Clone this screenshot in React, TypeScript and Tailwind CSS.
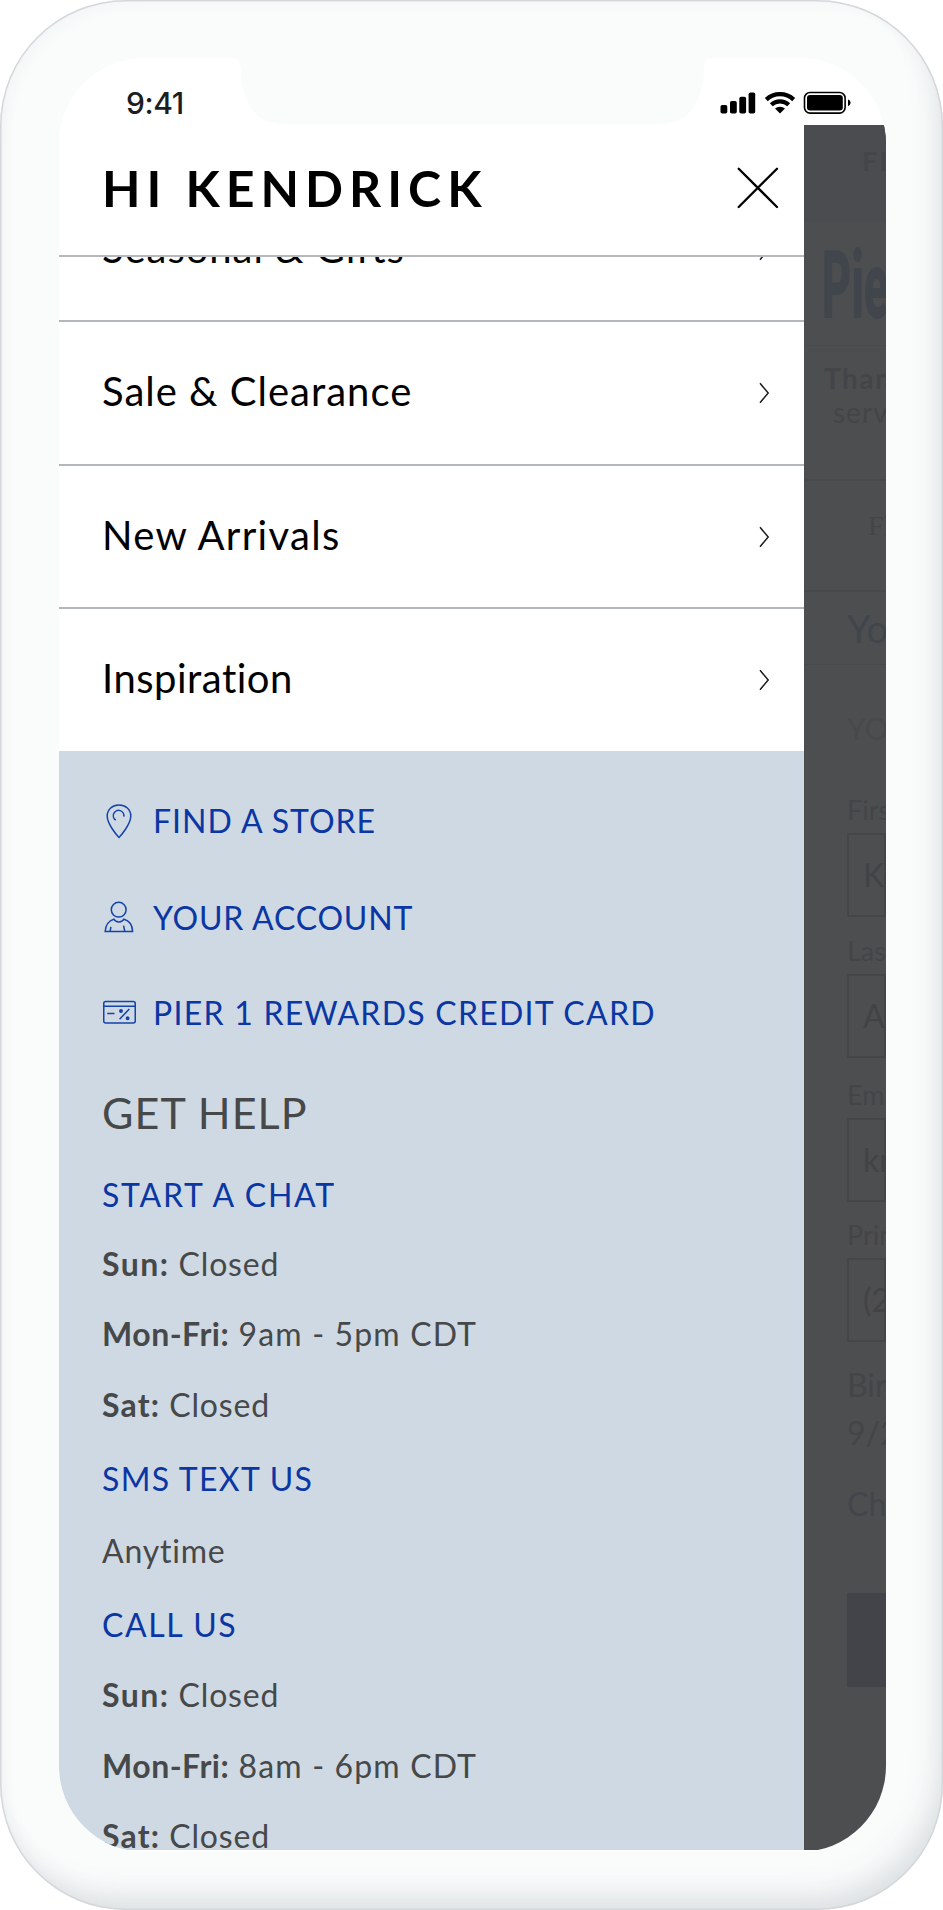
import type { ReactNode } from "react";

function StatusBar() {
  return (
    <div className="flex h-[67px] shrink-0 items-center bg-white pl-[67px] pr-[34px] pt-[23px]">
      <span className="font-['Inter',sans-serif] text-[30px] font-medium leading-[30px] tracking-[-0.4px] text-[#1d1d1d]">
        9:41
      </span>
      <svg className="ml-auto" width="132" height="24" viewBox="0 0 132 24">
        <rect x="0.5" y="14" width="6.8" height="8.5" rx="1.8" />
        <rect x="10" y="10" width="6.8" height="12.5" rx="1.8" />
        <rect x="19.3" y="5.7" width="6.8" height="16.8" rx="1.8" />
        <rect x="28.6" y="1.5" width="6.6" height="21" rx="1.8" />
        <g fill="none" stroke="#000" strokeWidth="4.2">
          <path d="M46.3 8.6a20 20 0 0 1 27.4 0" />
          <path d="M51.3 13.7a12.8 12.8 0 0 1 17.4 0" />
        </g>
        <path d="M60 22.500l-5-4.900a7.400 7.400 0 0 1 10 0z" />
        <rect x="84.5" y="1.5" width="40.6" height="20.6" rx="5.6" fill="none" stroke="#000" strokeWidth="1.6" />
        <rect x="87" y="4" width="35.8" height="15.6" rx="3" />
        <path d="M128 8.500c3.400 1 3.400 5.600 0 6.600z" />
      </svg>
    </div>
  );
}

function Notch() {
  return (
    <svg className="absolute left-[230px] top-[56px]" width="486" height="70" viewBox="0 0 486 70">
      <path
        d="M0 0V2C7 2 10.500 4.500 10.800 13C11 46 25 68.400 54 68.400H430C458 68.400 473.500 46 474 13C474 4.500 478 2 486 2V0Z"
        fill="#fafbfb"
      />
    </svg>
  );
}

function Chevron() {
  return (
    <svg className="ml-auto mt-[4px] shrink-0" width="12" height="22" viewBox="0 0 12 22">
      <path d="M2 1.300L10.200 11L2 20.700" fill="none" stroke="#1c1c1c" strokeWidth="1.500" />
    </svg>
  );
}

function MenuRow({ children, track }: { children: string; track: string }) {
  return (
    <div className="flex h-[143.500px] shrink-0 items-center border-b-2 border-[#b3b6ba] pb-[3px] pl-[43px] pr-[34px]">
      <span className={`whitespace-nowrap text-[40px] leading-none text-black ${track}`}>{children}</span>
      <Chevron />
    </div>
  );
}

function PinIcon() {
  return (
    <svg width="34" height="36" viewBox="0 0 34 36" fill="none" stroke="#1443ac" strokeWidth="1.500">
      <path d="M16 34.500C14 32.500 4.200 21 4.200 13C4.200 6.200 9.500 2 16 2S27.800 6.200 27.800 13C27.800 21 18 32.500 16 34.500Z" />
      <path d="M12.800 17.200A5.300 5.300 0 1 1 20.800 13.600" />
    </svg>
  );
}

function UserIcon() {
  return (
    <svg width="34" height="36" viewBox="0 0 34 36" fill="none" stroke="#1443ac" strokeWidth="1.500">
      <circle cx="15.700" cy="9.700" r="7.400" />
      <path d="M10.800 19.200C6 20.500 2.500 25.200 2.200 31.400H29.600C29.300 25.200 26 20.500 21 19.200C20 21 18 21.900 15.900 21.900S11.800 21 10.800 19.200Z" />
      <path d="M7.900 26.900L7.200 31.200M20.600 25.700L21.700 31.200" />
    </svg>
  );
}

function CardIcon() {
  return (
    <svg width="34" height="36" viewBox="0 0 34 36" fill="none" stroke="#1443ac" strokeWidth="1.500">
      <rect x="0.750" y="6.500" width="31.500" height="21.600" rx="2" />
      <path d="M0.700 11.300H32.200M4.200 18.400H11.500M16.600 24.200L26.300 14" />
      <circle cx="18" cy="16" r="1.200" fill="#1443ac" />
      <circle cx="24.600" cy="23.300" r="1.200" fill="#1443ac" />
    </svg>
  );
}

function IconLink({ icon, children, size }: { icon: ReactNode; children: string; size: string }) {
  return (
    <div className={`flex shrink-0 items-center gap-[16px] pl-px text-[#0a37a4] ${size}`}>
      {icon}
      <span className="whitespace-nowrap">{children}</span>
    </div>
  );
}

function HelpLink({ children, size }: { children: string; size: string }) {
  return <div className={`flex shrink-0 items-center whitespace-nowrap text-[#0a37a4] ${size}`}>{children}</div>;
}

function Hours({ day, time, dayTrack, timeTrack }: { day: string; time: string; dayTrack: string; timeTrack: string }) {
  return (
    <div className="flex h-[70.500px] shrink-0 items-center whitespace-pre">
      <b className={`font-bold ${dayTrack}`}>{day}</b>
      <span className={timeTrack}> {time}</span>
    </div>
  );
}

function Drawer() {
  return (
    <div className="flex w-[745px] shrink-0 flex-col overflow-hidden bg-white">
      <div className="flex h-[131.500px] shrink-0 items-center border-b-[2.500px] border-[#b6b8bb] pb-[3px] pl-[43px] pr-[25px]">
        <h1 className="whitespace-nowrap text-[50px] font-bold leading-none tracking-[6px] text-black">HI KENDRICK</h1>
        <svg className="ml-auto" width="42" height="42" viewBox="0 0 42 42">
          <path d="M1.700 1.700L40 40M40 1.700L1.700 40" stroke="#000" strokeWidth="2.300" strokeLinecap="round" />
        </svg>
      </div>
      <div className="flex h-[494px] shrink-0 flex-col justify-end overflow-hidden">
        <MenuRow track="tracking-[0.950px]">Seasonal &amp; Gifts</MenuRow>
        <MenuRow track="tracking-[1px]">Sale &amp; Clearance</MenuRow>
        <MenuRow track="tracking-[1.300px]">New Arrivals</MenuRow>
        <div className="-mb-[2px] flex flex-col">
          <MenuRow track="tracking-[0.500px]">Inspiration</MenuRow>
        </div>
      </div>
      <div className="flex grow flex-col bg-[#cfd9e3] pl-[43px] pt-[22px] text-[32px] leading-none text-[#464849]">
        <IconLink icon={<PinIcon />} size="h-[96px] tracking-[1px]">FIND A STORE</IconLink>
        <IconLink icon={<UserIcon />} size="h-[99px] tracking-[0.800px]">YOUR ACCOUNT</IconLink>
        <IconLink icon={<CardIcon />} size="h-[90px] tracking-[1.250px]">PIER 1 REWARDS CREDIT CARD</IconLink>
        <h2 className="flex h-[109px] shrink-0 items-center text-[43px] tracking-[1.100px]">GET HELP</h2>
        <HelpLink size="h-[62px] pb-[6px] tracking-[1.750px]">START A CHAT</HelpLink>
        <Hours day="Sun:" time="Closed" dayTrack="tracking-[1.500px]" timeTrack="tracking-[0.800px]" />
        <Hours day="Mon-Fri:" time="9am - 5pm CDT" dayTrack="tracking-[0.500px]" timeTrack="tracking-[1.150px]" />
        <Hours day="Sat:" time="Closed" dayTrack="tracking-[1.200px]" timeTrack="tracking-[0.800px]" />
        <HelpLink size="h-[76.500px] pt-[2px] tracking-[1.300px]">SMS TEXT US</HelpLink>
        <div className="flex h-[69px] shrink-0 items-center tracking-[0.800px]">Anytime</div>
        <HelpLink size="h-[74.500px] pt-[4px] tracking-[1.600px]">CALL US</HelpLink>
        <Hours day="Sun:" time="Closed" dayTrack="tracking-[1.500px]" timeTrack="tracking-[0.800px]" />
        <Hours day="Mon-Fri:" time="8am - 6pm CDT" dayTrack="tracking-[0.500px]" timeTrack="tracking-[1.150px]" />
        <Hours day="Sat:" time="Closed" dayTrack="tracking-[1.200px]" timeTrack="tracking-[0.800px]" />
      </div>
    </div>
  );
}

function Field({ label, value, gap }: { label: string; value: string; gap: string }) {
  return (
    <div className={`flex shrink-0 flex-col pl-[43px] ${gap}`}>
      <span className="flex h-[39px] items-center text-[27px]">{label}</span>
      <span className="mt-[4px] flex h-[84px] items-center border-2 border-[#454649] pl-[14px] text-[32px] text-[#424346]">
        {value}
      </span>
    </div>
  );
}

function DimmedPage() {
  return (
    <div className="flex w-[82px] shrink-0 flex-col overflow-hidden whitespace-nowrap bg-[#4d4e4f] leading-none text-[#444548]">
      <div className="flex h-[97px] shrink-0 items-start bg-[#4b4c50] pl-[58px] pt-[22px] text-[27px] font-bold tracking-[2px]">FIND</div>
      <div className="flex h-[124px] shrink-0 items-center border-b border-[#4a4b4d] pl-[18px] pt-[5px]">
        <span className="origin-left scale-x-[0.480] font-['Roboto','Inter',sans-serif] text-[94px] font-black text-[#41464d]">
          Pier
        </span>
      </div>
      <div className="flex h-[135px] shrink-0 flex-col border-b-2 border-[#48494b] pt-[15px] text-[28px]">
        <span className="pl-[20px] font-bold leading-[34px] tracking-[1.500px]">Thank</span>
        <span className="pl-[29px] leading-[34px] tracking-[1px]">service</span>
      </div>
      <div className="flex h-[111px] shrink-0 items-center border-b-2 border-[#48494b] pb-[20px] pl-[64px] font-['Liberation_Serif',serif] text-[28px]">
        FIND
      </div>
      <div className="flex h-[73px] shrink-0 items-center border-b border-[#48494b] pl-[43px] text-[38px] text-[#41464d]">Your</div>
      <div className="flex h-[125px] shrink-0 items-center pl-[43px] text-[30px] text-[#48494d]">YOUR</div>
      <Field label="First" value="Kendrick" gap="h-[141px]" />
      <Field label="Last" value="Allen" gap="h-[144px]" />
      <Field label="Email" value="kr" gap="h-[140px]" />
      <Field label="Primary" value="(214)" gap="h-[142px]" />
      <div className="flex h-[131px] shrink-0 flex-col pl-[43px] pt-[4px] text-[32px] leading-[48px]">
        <span>Birthday</span>
        <span>9/24</span>
      </div>
      <div className="flex h-[105px] shrink-0 items-start pl-[43px] text-[32px] text-[#41464d]">Change</div>
      <div className="ml-[43px] h-[94px] shrink-0 bg-[#424449]" />
    </div>
  );
}

export default function App() {
  return (
    <div className="relative flex h-[1910px] w-[943px] flex-col overflow-hidden rounded-[126px] bg-[#fafbfb] pl-[59px] pr-[57px] pt-[58px] font-['Lato','Open_Sans',sans-serif] shadow-[inset_0_0_0_1.500px_#d5d8da,inset_-8px_-16px_22px_-5px_#dde1e3,inset_-18px_-28px_34px_-12px_#f0f2f3,inset_8px_6px_16px_-6px_#f1f3f4] [font-variant-ligatures:none]">
      <div className="flex h-[1794px] w-[827px] shrink-0 flex-col overflow-hidden rounded-[86px] bg-white">
        <StatusBar />
        <div className="flex h-[1725px] shrink-0 overflow-hidden">
          <Drawer />
          <DimmedPage />
        </div>
      </div>
      <Notch />
    </div>
  );
}
